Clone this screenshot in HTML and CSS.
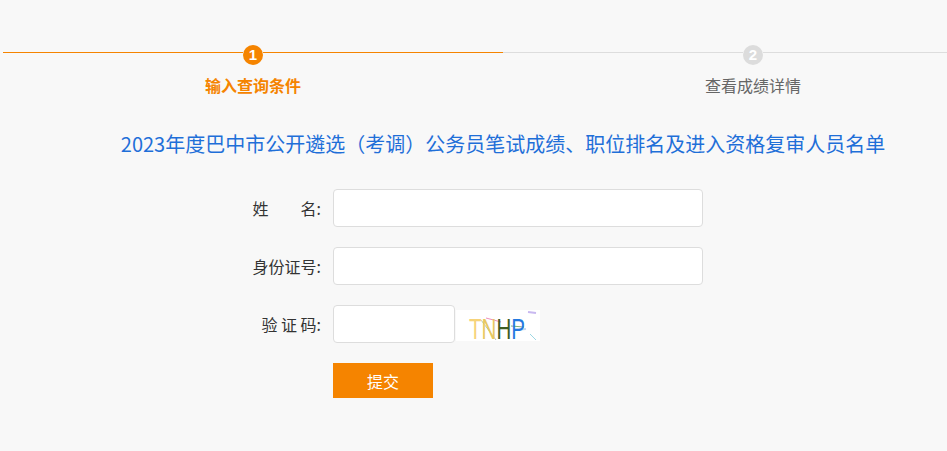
FILE: index.html
```html
<!DOCTYPE html>
<html lang="zh-CN">
<head>
<meta charset="utf-8">
<title>成绩查询</title>
<link rel="stylesheet" href="styles.css">
</head>
<body>
<div class="wrap">
  <div class="steps">
    <div class="step active">
      <div class="track"><span class="line"></span><span class="dot">1</span><span class="line"></span></div>
      <div class="step-label">输入查询条件</div>
    </div>
    <div class="step">
      <div class="track"><span class="line"></span><span class="dot">2</span><span class="line"></span></div>
      <div class="step-label">查看成绩详情</div>
    </div>
  </div>
  <h1 class="title">2023年度巴中市公开遴选（考调）公务员笔试成绩、职位排名及进入资格复审人员名单</h1>
  <form class="form">
    <div class="row">
      <label class="lbl">姓　　名:</label>
      <input class="ipt" type="text">
    </div>
    <div class="row">
      <label class="lbl">身份证号:</label>
      <input class="ipt" type="text">
    </div>
    <div class="row">
      <label class="lbl">验 证 码:</label>
      <input class="ipt ipt-code" type="text">
      <svg class="captcha" width="84" height="37" viewBox="0 0 84 37">
        <rect width="84" height="31" fill="#fff"/>
        <line x1="25" y1="10" x2="40" y2="30" stroke="#b9c7b0" stroke-width="1"/>
        <line x1="30" y1="8" x2="45" y2="12" stroke="#ef8fb8" stroke-width="1"/>
        <line x1="55" y1="16" x2="68" y2="17" stroke="#7fb07a" stroke-width="1"/>
        <line x1="58" y1="20" x2="70" y2="19" stroke="#c7d7ef" stroke-width="2"/>
        <line x1="72" y1="2" x2="80" y2="3" stroke="#c8b8f0" stroke-width="2"/>
        <line x1="74" y1="24" x2="80" y2="30" stroke="#9cd7e3" stroke-width="1"/>
        <text x="13" y="29" font-family="Liberation Sans, sans-serif" font-size="30" textLength="56" lengthAdjust="spacingAndGlyphs"><tspan fill="#f6d37a">T</tspan><tspan fill="#e8c860">N</tspan><tspan fill="#3e5c24">H</tspan><tspan fill="#2479e0">P</tspan></text>
      </svg>
    </div>
    <div class="row row-btn">
      <button class="btn" type="button">提交</button>
    </div>
  </form>
</div>
</body>
</html>
```

FILE: styles.css
```css
html, body {
  margin: 0;
  padding: 0;
}
body {
  background: #f8f8f8;
  font-family: "Noto Sans CJK SC", "Noto Sans", sans-serif;
  color: #333;
  overflow: hidden;
  width: 947px;
  height: 451px;
}
.wrap {
  width: 1000px;
  margin-left: 3px;
  padding-top: 45px;
}
.steps {
  display: flex;
}
.step {
  flex: 1;
  display: flex;
  flex-direction: column;
  align-items: stretch;
}
.track {
  display: flex;
  align-items: flex-start;
  height: 20px;
}
.line {
  flex: 1;
  height: 1px;
  margin-top: 7px;
  background: #dddddd;
}
.step.active .line {
  background: #f58400;
}
.dot {
  width: 20px;
  height: 20px;
  border-radius: 50%;
  background: #dcdcdc;
  color: #fff;
  font-family: "Liberation Sans", Arial, sans-serif;
  font-size: 15px;
  font-weight: bold;
  line-height: 20px;
  text-align: center;
}
.step.active .dot {
  background: #f58400;
}
.step-label {
  margin-top: 8px;
  text-align: center;
  font-size: 16px;
  line-height: 24px;
  color: #666;
}
.step.active .step-label {
  color: #f58400;
  font-weight: bold;
}
.title {
  margin: 32px 0 0;
  text-align: center;
  font-size: 20px;
  line-height: 30px;
  font-weight: normal;
  color: #1f6fd8;
}
.form {
  margin: 30px 0 0 242px;
  display: flex;
  flex-direction: column;
  gap: 20px;
}
.row {
  display: flex;
  align-items: center;
  height: 38px;
}
.lbl {
  width: 76px;
  padding-right: 12px;
  text-align: right;
  font-size: 16px;
  color: #333;
  white-space: nowrap;
}
.ipt {
  box-sizing: border-box;
  width: 370px;
  height: 38px;
  border: 1px solid #dddddd;
  border-radius: 4px;
  background: #fff;
  padding: 0 8px;
  outline: none;
}
.ipt-code {
  width: 122px;
}
.captcha {
  display: block;
  align-self: flex-start;
  margin-left: 1px;
  margin-top: 5px;
}
.row-btn {
  padding-left: 88px;
  height: 35px;
}
.btn {
  width: 100px;
  height: 35px;
  border: 0;
  background: #f58400;
  color: #fff;
  font-family: "Noto Sans CJK SC", sans-serif;
  font-size: 16px;
  padding: 0;
  cursor: pointer;
}
```
